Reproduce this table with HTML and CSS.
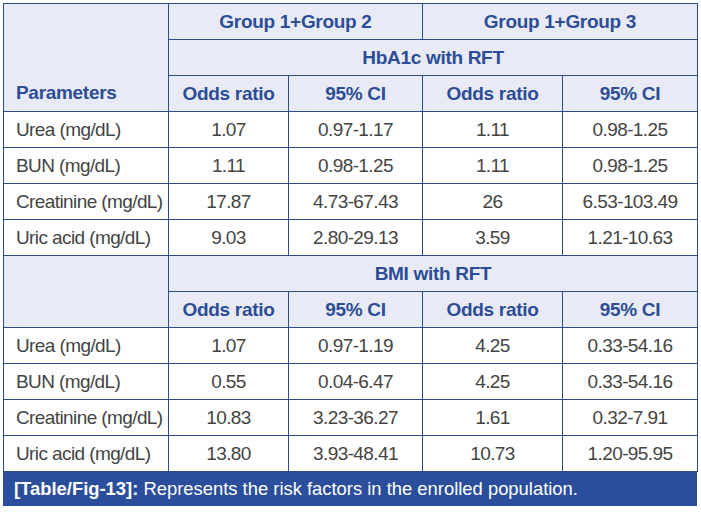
FILE: index.html
```html
<!DOCTYPE html>
<html>
<head>
<meta charset="utf-8">
<link rel="stylesheet" href="styles.css">
</head>
<body>
<div class="wrap">
<table class="risk">
  <colgroup>
    <col class="c-param"><col class="c-or"><col class="c-ci"><col class="c-or2"><col class="c-ci2">
  </colgroup>
  <tr class="head">
    <th rowspan="3" class="param-head">Parameters</th>
    <th colspan="2">Group 1+Group 2</th>
    <th colspan="2">Group 1+Group 3</th>
  </tr>
  <tr class="head"><th colspan="4">HbA1c with RFT</th></tr>
  <tr class="head"><th>Odds ratio</th><th>95% CI</th><th>Odds ratio</th><th>95% CI</th></tr>
  <tr><td class="p">Urea (mg/dL)</td><td>1.07</td><td>0.97-1.17</td><td>1.11</td><td>0.98-1.25</td></tr>
  <tr><td class="p">BUN (mg/dL)</td><td>1.11</td><td>0.98-1.25</td><td>1.11</td><td>0.98-1.25</td></tr>
  <tr><td class="p">Creatinine (mg/dL)</td><td>17.87</td><td>4.73-67.43</td><td>26</td><td>6.53-103.49</td></tr>
  <tr><td class="p">Uric acid (mg/dL)</td><td>9.03</td><td>2.80-29.13</td><td>3.59</td><td>1.21-10.63</td></tr>
  <tr class="head">
    <th rowspan="2" class="param-head"></th>
    <th colspan="4">BMI with RFT</th>
  </tr>
  <tr class="head"><th>Odds ratio</th><th>95% CI</th><th>Odds ratio</th><th>95% CI</th></tr>
  <tr><td class="p">Urea (mg/dL)</td><td>1.07</td><td>0.97-1.19</td><td>4.25</td><td>0.33-54.16</td></tr>
  <tr><td class="p">BUN (mg/dL)</td><td>0.55</td><td>0.04-6.47</td><td>4.25</td><td>0.33-54.16</td></tr>
  <tr><td class="p">Creatinine (mg/dL)</td><td>10.83</td><td>3.23-36.27</td><td>1.61</td><td>0.32-7.91</td></tr>
  <tr><td class="p">Uric acid (mg/dL)</td><td>13.80</td><td>3.93-48.41</td><td>10.73</td><td>1.20-95.95</td></tr>
</table>
<div class="caption"><b>[Table/Fig-13]:</b> Represents the risk factors in the enrolled population.</div>
</div>
</body>
</html>
```
FILE: styles.css
```css
html, body {
  margin: 0;
  padding: 0;
  background: #ffffff;
}
.wrap {
  padding: 3px 0 0 3px;
  width: 694px;
  font-family: "Liberation Sans", Arial, sans-serif;
}
.risk {
  border-collapse: collapse;
  table-layout: fixed;
  width: 694px;
  font-size: 19px;
}
.c-param { width: 165px; }
.c-or { width: 120px; }
.c-ci { width: 134px; }
.c-or2 { width: 140px; }
.c-ci2 { width: 135px; }
.risk tr { height: 36px; }
.risk th, .risk td {
  border: 1px solid #2c4b89;
  padding: 0;
  text-align: center;
  vertical-align: middle;
  white-space: nowrap;
}
.risk th {
  background: #e8ebf5;
  color: #2d4d96;
  font-weight: bold;
  letter-spacing: -0.3px;
}
.risk td {
  color: #444444;
  font-weight: normal;
  letter-spacing: -0.6px;
}
.risk th.param-head {
  text-align: left;
  vertical-align: bottom;
  padding: 0 0 7px 12px;
}
.risk td.p {
  text-align: left;
  padding-left: 12px;
}
.caption {
  background: #2a4e9c;
  color: #ffffff;
  height: 34px;
  line-height: 34px;
  font-size: 18.4px;
  padding-left: 11px;
}
.caption b { font-weight: bold; }
```
